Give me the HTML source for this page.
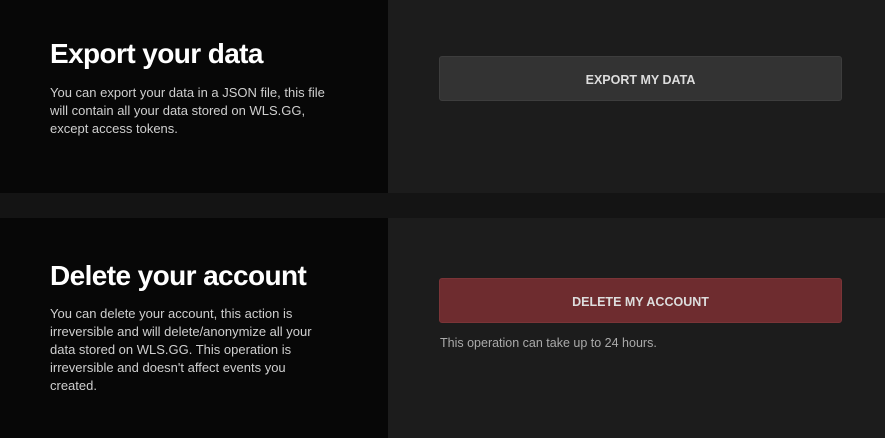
<!DOCTYPE html>
<html><head><style>
body{margin:0;width:885px;height:438px;background:#141414;font-family:"Liberation Sans",sans-serif;overflow:hidden;position:relative}
.l{position:absolute;left:0;width:388px;background:#070707}
.r{position:absolute;left:388px;width:497px;background:#1c1c1c}
h2{position:absolute;left:50px;margin:0;color:#fff;font-size:28px;font-weight:bold;letter-spacing:-0.6px}
p{position:absolute;left:50px;margin:0;color:#cfcfcf;font-size:13px;line-height:18px;width:320px;white-space:nowrap}
.b{position:absolute;left:439px;width:401px;height:43px;border-radius:3px;color:#ddd;font-size:12.5px;font-weight:bold;text-align:center;line-height:46px}
</style></head><body>
<div class="l" style="top:0;height:193px"></div>
<div class="r" style="top:0;height:193px"></div>
<div class="l" style="top:218px;height:220px"></div>
<div class="r" style="top:218px;height:220px"></div>
<h2 style="top:38px">Export your data</h2>
<p style="top:84px">You can export your data in a JSON file, this file<br>will contain all your data stored on WLS.GG,<br>except access tokens.</p>
<h2 style="top:260px">Delete your account</h2>
<p style="top:305px">You can delete your account, this action is<br>irreversible and will delete/anonymize all your<br>data stored on WLS.GG. This operation is<br>irreversible and doesn't affect events you<br>created.</p>
<div class="b" style="top:56px;background:#333;border:1px solid #3d3d3d">EXPORT MY DATA</div>
<div class="b" style="top:278px;background:#6e2c2f;border:1px solid #7a3437">DELETE MY ACCOUNT</div>
<div style="position:absolute;left:440px;top:336px;color:#aaa;font-size:12.5px">This operation can take up to 24 hours.</div>
</body></html>
